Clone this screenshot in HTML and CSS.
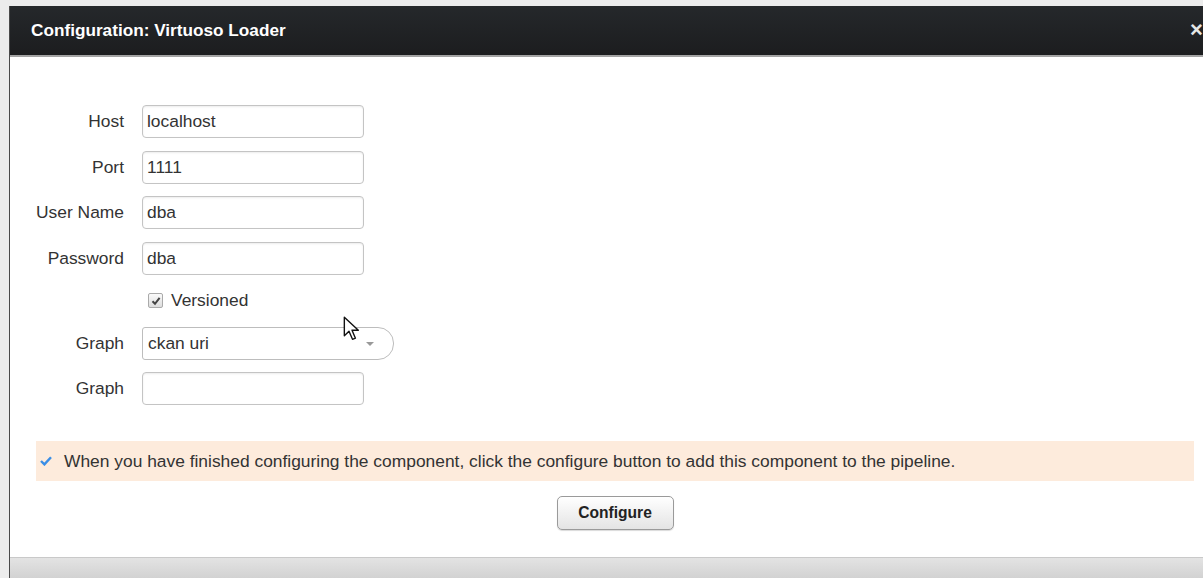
FILE: index.html
```html
<!DOCTYPE html>
<html lang="en">
<head>
<meta charset="utf-8">
<title>Configuration: Virtuoso Loader</title>
<link rel="stylesheet" href="styles.css">
</head>
<body>
<div class="page">
  <div class="dialog">
    <div class="dialog-header">
      <span class="dialog-title">Configuration: Virtuoso Loader</span>
      <span class="dialog-close">&times;</span>
    </div>
    <div class="dialog-body">
      <form class="config-form">
        <label class="field-label" for="host">Host</label>
        <input class="field-input" id="host" type="text" value="localhost">

        <label class="field-label" for="port">Port</label>
        <input class="field-input" id="port" type="text" value="1111">

        <label class="field-label" for="user">User Name</label>
        <input class="field-input" id="user" type="text" value="dba">

        <label class="field-label" for="pass">Password</label>
        <input class="field-input" id="pass" type="text" value="dba">

        <span></span>
        <label class="check-row"><span class="check-box"><svg viewBox="0 0 10 10" width="10" height="10"><path d="M1.5 5.2 L4 7.8 L8.6 1.8" fill="none" stroke="#444" stroke-width="2"/></svg></span>Versioned</label>

        <label class="field-label" for="graph-sel">Graph</label>
        <div class="select-box" id="graph-sel"><span>ckan uri</span><span class="select-arrow"></span></div>

        <label class="field-label" for="graph">Graph</label>
        <input class="field-input" id="graph" type="text" value="">
      </form>

      <div class="actions">
        <div class="notice">
          <svg class="notice-icon" viewBox="0 0 12 10" width="12" height="10"><path d="M1 5 L4.4 8.4 L11 1.2" fill="none" stroke="#3a8ee6" stroke-width="2.4"/></svg>
          <span>When you have finished configuring the component, click the configure button to add this component to the pipeline.</span>
        </div>
        <button class="btn" type="button">Configure</button>
      </div>
    </div>
    <div class="dialog-footer"></div>
  </div>
</div>
<svg class="pointer" viewBox="0 0 16 24" width="19" height="28"><path d="M1 1 L1 17 L5 13 L8 20 L10.5 19 L7.6 12.2 L13 12.2 Z" fill="#fff" stroke="#111" stroke-width="1.2" stroke-linejoin="round"/></svg>
</body>
</html>
```
FILE: styles.css
```css
html, body {
  margin: 0;
  padding: 0;
  height: 100%;
  overflow: hidden;
}

body {
  background: #ececec;
  font-family: "Liberation Sans", Arial, sans-serif;
  color: #333;
  position: relative;
}

.page {
  padding: 6px 0 0 9px;
}

.dialog {
  width: 1230px;
  height: 572px;
  background: #fff;
  border-left: 1px solid #4a4a4a;
  display: flex;
  flex-direction: column;
}

.dialog-header {
  height: 49px;
  flex: none;
  background: linear-gradient(#25282b, #1c1d1f);
  border-bottom: 2px solid #a3a3a3;
  display: flex;
  align-items: center;
  padding-left: 21px;
  position: relative;
}

.dialog-title {
  color: #fff;
  font-weight: bold;
  font-size: 17.2px;
}

.dialog-close {
  position: absolute;
  left: 1180px;
  top: 11px;
  color: #e6e6e6;
  font-weight: bold;
  font-size: 22px;
}

.dialog-body {
  flex: 1;
  padding-top: 48px;
}

.config-form {
  display: grid;
  grid-template-columns: 114px 252px;
  column-gap: 18px;
  row-gap: 12.5px;
  align-items: center;
}

.field-label {
  text-align: right;
  font-size: 17.4px;
  color: #333;
}

.field-input {
  width: 222px;
  height: 33px;
  box-sizing: border-box;
  border: 1px solid #c4c4c4;
  border-radius: 4px;
  padding: 0 4px;
  font-family: "Liberation Sans", Arial, sans-serif;
  font-size: 17.4px;
  color: #333;
  box-shadow: inset 0 1px 2px rgba(0,0,0,0.08);
  margin: 0;
}

.check-row {
  height: 27px;
  display: flex;
  align-items: center;
  gap: 8px;
  padding-left: 6px;
  font-size: 17.4px;
  color: #333;
}

.check-box {
  width: 13px;
  height: 13px;
  border: 1px solid #aaa;
  border-radius: 2px;
  background: linear-gradient(#fafafa, #ddd);
  display: flex;
  align-items: center;
  justify-content: center;
}

.select-box {
  width: 252px;
  height: 33px;
  box-sizing: border-box;
  border: 1px solid #bdbdbd;
  border-radius: 3px 16px 16px 3px;
  display: flex;
  align-items: center;
  justify-content: space-between;
  padding: 0 19px 0 5px;
  font-size: 17.4px;
  color: #333;
}

.select-arrow {
  width: 0;
  height: 0;
  border-left: 4px solid transparent;
  border-right: 4px solid transparent;
  border-top: 4px solid #999;
  margin-top: 2px;
}

.actions {
  width: 1158px;
  margin: 36px 0 0 26px;
  display: flex;
  flex-direction: column;
  align-items: center;
}

.notice {
  align-self: stretch;
  height: 40px;
  background: #fdebdc;
  display: flex;
  align-items: center;
  gap: 12px;
  padding-left: 4px;
  font-size: 17.4px;
  color: #333;
}

.notice-icon {
  flex: none;
}

.btn {
  margin-top: 15px;
  width: 117px;
  height: 34px;
  border: 1px solid #9a9a9a;
  border-radius: 5px;
  background: linear-gradient(#ffffff, #e4e4e4);
  font-family: "Liberation Sans", Arial, sans-serif;
  font-weight: bold;
  font-size: 15.6px;
  color: #222;
  box-shadow: 0 1px 1px rgba(0,0,0,0.15);
}

.dialog-footer {
  height: 20px;
  flex: none;
  border-top: 1px solid #c9c9c9;
  background: linear-gradient(#e3e3e3, #d2d2d2);
}

.pointer {
  position: absolute;
  left: 343px;
  top: 316px;
}
```
